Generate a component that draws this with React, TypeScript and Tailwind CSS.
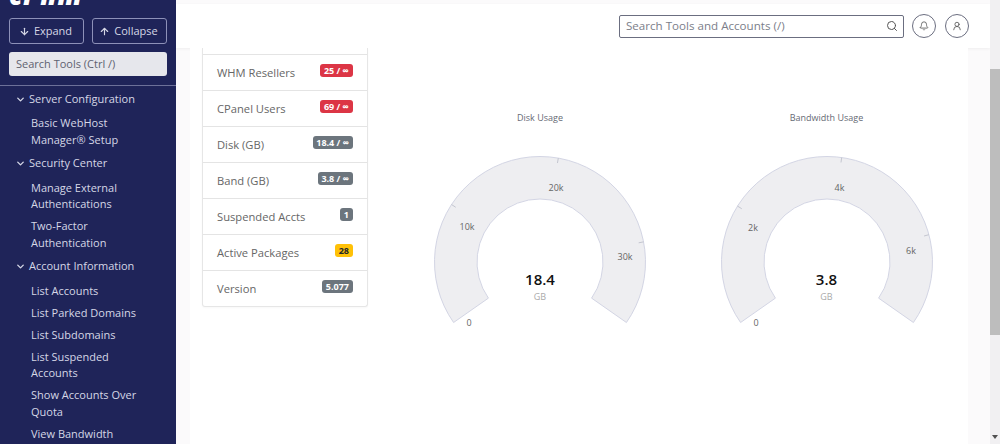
import { ArrowDown, ArrowUp, Bell, ChevronDown, Search, UserRound } from "lucide-react";

const navGroups = [
  { title: "Server Configuration", items: ["Basic WebHost Manager® Setup"] },
  { title: "Security Center", items: ["Manage External Authentications", "Two-Factor Authentication"] },
  {
    title: "Account Information",
    items: [
      "List Accounts",
      "List Parked Domains",
      "List Subdomains",
      "List Suspended Accounts",
      "Show Accounts Over Quota",
      "View Bandwidth Usage",
    ],
  },
];

const stats = [
  { label: "WHM Resellers", value: "25 / ∞", color: "bg-[#dc3545] text-white" },
  { label: "CPanel Users", value: "69 / ∞", color: "bg-[#dc3545] text-white" },
  { label: "Disk (GB)", value: "18.4 / ∞", color: "bg-[#6c757d] text-white" },
  { label: "Band (GB)", value: "3.8 / ∞", color: "bg-[#6c757d] text-white" },
  { label: "Suspended Accts", value: "1", color: "bg-[#6c757d] text-white" },
  { label: "Active Packages", value: "28", color: "bg-[#ffc107] text-[#212529]" },
  { label: "Version", value: "5.077", color: "bg-[#6c757d] text-white" },
];

const RO = 105.5;
const RI = 63;
const CX = 110;
const CY = 110;

function polar(r: number, deg: number) {
  const a = (deg * Math.PI) / 180;
  return [CX + r * Math.sin(a), CY - r * Math.cos(a)];
}

type GaugeProps = {
  title: string;
  value: string;
  ticks: { deg: number; label: string; lx: number; ly: number }[];
};

// 220 x 180 drawing, arc runs from -125 to +125 degrees
function Gauge({ title, value, ticks }: GaugeProps) {
  const [ax, ay] = polar(RO, -125);
  const [bx, by] = polar(RO, 125);
  const [cx, cy] = polar(RI, 125);
  const [dx, dy] = polar(RI, -125);
  const d = `M${ax} ${ay} A${RO} ${RO} 0 1 1 ${bx} ${by} L${cx} ${cy} A${RI} ${RI} 0 1 0 ${dx} ${dy} Z`;

  return (
    <div className="flex w-[220px] flex-col items-center">
      <div className="h-[40px] text-[9px] leading-[12px] text-[#666a74]">{title}</div>
      <div className="relative h-[180px] w-[220px]">
        <svg width="220" height="180" viewBox="0 0 220 180">
          <path d={d} fill="#eeeef1" stroke="#d3d5e4" strokeWidth="1" />
          {ticks.map((t) => {
            const [x1, y1] = polar(RO, t.deg);
            const [x2, y2] = polar(RO - 5, t.deg);
            return <line key={t.label} x1={x1} y1={y1} x2={x2} y2={y2} stroke="#c4c6d0" strokeWidth="1" />;
          })}
          {ticks.map((t) => (
            <text key={t.label} x={t.lx} y={t.ly} textAnchor="middle" fontSize="9" fill="#666" fontFamily="Open Sans, sans-serif">
              {t.label}
            </text>
          ))}
          <text x={39} y={174} textAnchor="middle" fontSize="9" fill="#666" fontFamily="Open Sans, sans-serif">
            0
          </text>
        </svg>
        <div className="absolute left-0 top-[117px] w-[220px] text-center">
          <div className="text-[15px] leading-[20px] font-semibold text-[#111]">{value}</div>
          <div className="mt-[2px] text-[9px] leading-[12px] text-[#aaa]">GB</div>
        </div>
      </div>
    </div>
  );
}

export default function App() {
  return (
    <div className="flex h-[444px] w-[1000px] overflow-hidden bg-[#fbfafb] font-['Open_Sans',sans-serif]">
      {/* sidebar */}
      <aside className="h-[444px] w-[176px] shrink-0 overflow-hidden bg-[#1f2459]">
        <div className="h-[5px] overflow-hidden pl-[9px]">
          <div className="-mt-[15px] text-[26px] leading-[20px] font-extrabold tracking-[1px] text-white italic">cPhm</div>
        </div>
        <div className="mt-[13px] flex gap-[8px] px-[9px]">
          <button className="flex h-[26px] w-[75px] items-center justify-center gap-[4px] rounded-[3px] border border-[#8d91b8] pr-[2px] text-[11px] text-[#d5d7e6]">
            <ArrowDown size={11} strokeWidth={2.5} />
            Expand
          </button>
          <button className="flex h-[26px] w-[75px] items-center justify-center gap-[4px] rounded-[3px] border border-[#8d91b8] pr-[2px] text-[11px] text-[#d5d7e6]">
            <ArrowUp size={11} strokeWidth={2.5} />
            Collapse
          </button>
        </div>
        <div className="mx-[9px] mt-[8px] flex h-[24px] items-center rounded-[3px] bg-[#e6e7ec] px-[7px] text-[11px] text-[#5e6270]">
          Search Tools (Ctrl /)
        </div>
        <div className="mt-[9px] border-t border-[#6d7199] pt-[4px]">
          {navGroups.map((g) => (
            <div key={g.title}>
              <div className="flex h-[18px] items-center pl-[15px] text-[11px] text-[#d5d7e6]">
                <ChevronDown size={11} strokeWidth={3} className="mr-[3px]" />
                {g.title}
              </div>
              <ul className="pt-[7px] pb-[1px]">
                {g.items.map((it) => (
                  <li key={it} className="mb-[5.5px] w-[140px] pl-[31px] text-[11px] leading-[16.5px] text-[#d5d7e6]">
                    {it}
                  </li>
                ))}
              </ul>
            </div>
          ))}
        </div>
      </aside>

      {/* main */}
      <div className="flex w-[814px] shrink-0 flex-col">
        <header className="mt-[4px] flex h-[44px] shrink-0 items-center justify-end bg-white shadow-[0_1px_3px_rgba(0,0,0,0.05)]">
          <div className="flex h-[23px] w-[285px] items-center justify-between rounded-[2px] border border-[#6b6e80] pl-[6px] pr-[5px] text-[11.6px] text-[#7b7e8a]">
            Search Tools and Accounts (/)
            <Search size={12} className="text-[#555]" />
          </div>
          <div className="ml-[8px] flex h-[24px] w-[24px] items-center justify-center rounded-full border border-[#6b6e80] text-[#555]">
            <Bell size={10} />
          </div>
          <div className="ml-[9px] mr-[21px] flex h-[24px] w-[24px] items-center justify-center rounded-full border border-[#6b6e80] text-[#555]">
            <UserRound size={10} />
          </div>
        </header>

        <div className="flex flex-1 overflow-hidden">
          <div className="ml-[14px] flex w-[778px] overflow-hidden bg-white">
            <div className="ml-[12px] w-[166px] shrink-0">
              <ul className="rounded-b-[3px] border-x border-b border-[#e6e6e6] pt-[6px] shadow-[0_1px_2px_rgba(0,0,0,0.03)]">
                {stats.map((s) => (
                  <li key={s.label} className="relative flex h-[36px] items-center border-t border-[#e4e4e4] pt-[1px] pl-[14px] text-[11.2px] text-[#666]">
                    {s.label}
                    <span className={`absolute right-[14.5px] top-[9px] rounded-[3px] px-[3.5px] text-[9px] leading-[13px] font-bold ${s.color}`}>
                      {s.value}
                    </span>
                  </li>
                ))}
              </ul>
            </div>
            <div className="ml-[62px] mt-[64px] flex gap-[66.5px]">
              <Gauge
                title="Disk Usage"
                value="18.4"
                ticks={[
                  { deg: -57, label: "10k", lx: 37, ly: 78 },
                  { deg: 10, label: "20k", lx: 126, ly: 39 },
                  { deg: 79, label: "30k", lx: 195, ly: 108 },
                ]}
              />
              <Gauge
                title="Bandwidth Usage"
                value="3.8"
                ticks={[
                  { deg: -58, label: "2k", lx: 36, ly: 79 },
                  { deg: 8, label: "4k", lx: 122.5, ly: 39 },
                  { deg: 75, label: "6k", lx: 194, ly: 102 },
                ]}
              />
            </div>
          </div>
        </div>
      </div>

      {/* scrollbar */}
      <div className="flex w-[10px] shrink-0 flex-col items-center bg-[#f1f0f2]">
        <div className="mt-[69px] h-[266px] w-full bg-[#bdbdbd]" />
        <div className="mt-[100px] h-0 w-0 border-x-[3px] border-t-[4px] border-x-transparent border-t-[#505050]" />
      </div>
    </div>
  );
}
